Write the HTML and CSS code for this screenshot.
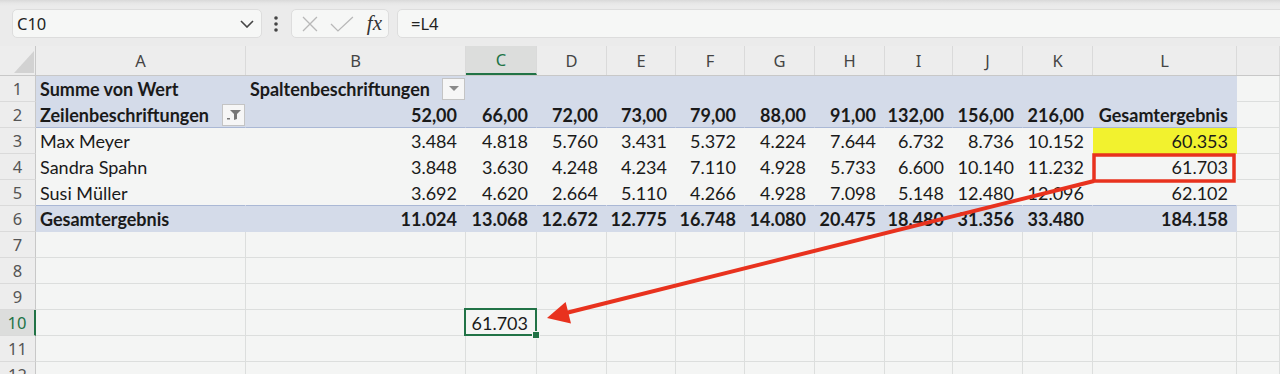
FILE: index.html
```html
<!DOCTYPE html>
<html lang="de">
<head>
<meta charset="UTF-8" />
<meta name="viewport" content="width=device-width, initial-scale=1" />
<title>Pivot – Bezug auf Gesamtergebnis</title>
<link rel="stylesheet" href="styles.css">
</head>
<body>
<div class="app">

<div class="toolbar">
  <div class="namebox">
    <span>C10</span>
    <svg class="chev" width="14" height="8" viewBox="0 0 14 8"><polyline points="1,1 7,7 13,1" fill="none" stroke="#444" stroke-width="1.6"/></svg>
  </div>
  <svg class="kebab" width="6" height="18" viewBox="0 0 6 18"><circle cx="3" cy="3" r="1.8" fill="#444"/><circle cx="3" cy="9" r="1.8" fill="#444"/><circle cx="3" cy="15" r="1.8" fill="#444"/></svg>
  <div class="fxbox">
    <svg width="16" height="16" viewBox="0 0 16 16"><path d="M1 1 L15 15 M15 1 L1 15" stroke="#b8b8b8" stroke-width="1.3" fill="none"/></svg>
    <svg width="24" height="16" viewBox="0 0 24 16"><polyline points="1,8 8,15 23,1" stroke="#b8b8b8" stroke-width="1.3" fill="none"/></svg>
    <span class="fx">fx</span>
  </div>
  <div class="formula">=L4</div>
</div>

<div class="sheet">
  <div class="row colhead">
    <div class="corner"><svg width="20" height="22" viewBox="0 0 20 22"><polygon points="20,0 20,22 0,22" fill="#d2d2d2"/></svg></div>
    <div class="ch">A</div><div class="ch">B</div><div class="ch active">C</div><div class="ch">D</div>
    <div class="ch">E</div><div class="ch">F</div><div class="ch">G</div><div class="ch">H</div>
    <div class="ch">I</div><div class="ch">J</div><div class="ch">K</div><div class="ch">L</div><div class="ch"></div>
  </div>

  <div class="row">
    <div class="rh">1</div>
    <div class="c pv fill b">Summe von Wert</div>
    <div class="c pv fill b">Spaltenbeschriftungen<span class="btn"><svg width="10" height="6" viewBox="0 0 10 6"><polygon points="0,0 10,0 5,5" fill="#8a8a8a"/></svg></span></div>
    <div class="c pv fill"></div><div class="c pv fill"></div><div class="c pv fill"></div><div class="c pv fill"></div>
    <div class="c pv fill"></div><div class="c pv fill"></div><div class="c pv fill"></div><div class="c pv fill"></div>
    <div class="c pv fill"></div><div class="c pv fill"></div><div class="c"></div>
  </div>

  <div class="row">
    <div class="rh">2</div>
    <div class="c pv fill line b">Zeilenbeschriftungen<span class="btn"><svg width="14" height="10" viewBox="0 0 14 10"><rect x="0" y="8" width="3" height="1.5" fill="#777"/><polygon points="3,0 14,0 10,4 10,9 7,10 7,4" fill="#777"/></svg></span></div>
    <div class="c pv fill line b n">52,00</div><div class="c pv fill line b n">66,00</div><div class="c pv fill line b n">72,00</div>
    <div class="c pv fill line b n">73,00</div><div class="c pv fill line b n">79,00</div><div class="c pv fill line b n">88,00</div>
    <div class="c pv fill line b n">91,00</div><div class="c pv fill line b n">132,00</div><div class="c pv fill line b n">156,00</div>
    <div class="c pv fill line b n">216,00</div><div class="c pv fill line b n">Gesamtergebnis</div><div class="c"></div>
  </div>

  <div class="row">
    <div class="rh">3</div>
    <div class="c pv">Max Meyer</div>
    <div class="c pv n">3.484</div><div class="c pv n">4.818</div><div class="c pv n">5.760</div><div class="c pv n">3.431</div>
    <div class="c pv n">5.372</div><div class="c pv n">4.224</div><div class="c pv n">7.644</div><div class="c pv n">6.732</div>
    <div class="c pv n">8.736</div><div class="c pv n">10.152</div><div class="c pv n yellow">60.353</div><div class="c"></div>
  </div>

  <div class="row">
    <div class="rh">4</div>
    <div class="c pv">Sandra Spahn</div>
    <div class="c pv n">3.848</div><div class="c pv n">3.630</div><div class="c pv n">4.248</div><div class="c pv n">4.234</div>
    <div class="c pv n">7.110</div><div class="c pv n">4.928</div><div class="c pv n">5.733</div><div class="c pv n">6.600</div>
    <div class="c pv n">10.140</div><div class="c pv n">11.232</div><div class="c pv n">61.703</div><div class="c"></div>
  </div>

  <div class="row">
    <div class="rh">5</div>
    <div class="c pv line">Susi Müller</div>
    <div class="c pv line n">3.692</div><div class="c pv line n">4.620</div><div class="c pv line n">2.664</div><div class="c pv line n">5.110</div>
    <div class="c pv line n">4.266</div><div class="c pv line n">4.928</div><div class="c pv line n">7.098</div><div class="c pv line n">5.148</div>
    <div class="c pv line n">12.480</div><div class="c pv line n">12.096</div><div class="c pv line n">62.102</div><div class="c"></div>
  </div>

  <div class="row">
    <div class="rh">6</div>
    <div class="c pv fill b">Gesamtergebnis</div>
    <div class="c pv fill b n">11.024</div><div class="c pv fill b n">13.068</div><div class="c pv fill b n">12.672</div><div class="c pv fill b n">12.775</div>
    <div class="c pv fill b n">16.748</div><div class="c pv fill b n">14.080</div><div class="c pv fill b n">20.475</div><div class="c pv fill b n">18.480</div>
    <div class="c pv fill b n">31.356</div><div class="c pv fill b n">33.480</div><div class="c pv fill b n">184.158</div><div class="c"></div>
  </div>

  <div class="row">
    <div class="rh">7</div>
    <div class="c"></div><div class="c"></div><div class="c"></div><div class="c"></div><div class="c"></div><div class="c"></div>
    <div class="c"></div><div class="c"></div><div class="c"></div><div class="c"></div><div class="c"></div><div class="c"></div><div class="c"></div>
  </div>
  <div class="row">
    <div class="rh">8</div>
    <div class="c"></div><div class="c"></div><div class="c"></div><div class="c"></div><div class="c"></div><div class="c"></div>
    <div class="c"></div><div class="c"></div><div class="c"></div><div class="c"></div><div class="c"></div><div class="c"></div><div class="c"></div>
  </div>
  <div class="row">
    <div class="rh">9</div>
    <div class="c"></div><div class="c"></div><div class="c"></div><div class="c"></div><div class="c"></div><div class="c"></div>
    <div class="c"></div><div class="c"></div><div class="c"></div><div class="c"></div><div class="c"></div><div class="c"></div><div class="c"></div>
  </div>
  <div class="row">
    <div class="rh active">10</div>
    <div class="c"></div><div class="c"></div><div class="c n sel">61.703</div><div class="c"></div><div class="c"></div><div class="c"></div>
    <div class="c"></div><div class="c"></div><div class="c"></div><div class="c"></div><div class="c"></div><div class="c"></div><div class="c"></div>
  </div>
  <div class="row">
    <div class="rh">11</div>
    <div class="c"></div><div class="c"></div><div class="c"></div><div class="c"></div><div class="c"></div><div class="c"></div>
    <div class="c"></div><div class="c"></div><div class="c"></div><div class="c"></div><div class="c"></div><div class="c"></div><div class="c"></div>
  </div>
  <div class="row">
    <div class="rh">12</div>
    <div class="c"></div><div class="c"></div><div class="c"></div><div class="c"></div><div class="c"></div><div class="c"></div>
    <div class="c"></div><div class="c"></div><div class="c"></div><div class="c"></div><div class="c"></div><div class="c"></div><div class="c"></div>
  </div>
</div>

<!-- annotation: marked cell and arrow -->
<svg class="marks" width="1280" height="374" viewBox="0 0 1280 374">
  <rect x="1094" y="155" width="140" height="26" fill="none" stroke="#e8321e" stroke-width="3.5"/>
  <line x1="1094" y1="181" x2="566" y2="313" stroke="#e8321e" stroke-width="4"/>
  <polygon points="547,318 565.6,302 571,323.4" fill="#e8321e"/>
</svg>

</div>
</body>
</html>
```

FILE: styles.css
```css
:root {
  --cols: 36px 210px 220px 71px 70px 69px 69px 70px 70px 68px 70px 70px 144px 1fr;
  --grid: #dcdedd;
  --pivot: #d4dbe9;
  --pivot-line: #aab8d5;
  --green: #217346;
}
* {
  box-sizing: border-box;
}
body {
  margin: 0;
  background-color: #f4f5f4;
  color: #1a1a1a;
  overflow: hidden;
}
.app {
  position: relative;
  width: 1280px;
  height: 374px;
  overflow: hidden;
}

/* formula bar */
.toolbar {
  height: 46px;
  display: flex;
  align-items: center;
  padding: 1px 0 0 12px;
  background: linear-gradient(#d9d9d9 0, #e6e6e6 3px, #ebebeb 6px);
  font-family: "Noto Sans", "Open Sans", sans-serif;
  font-size: 16.5px;
  color: #222;
}
.namebox, .fxbox, .formula {
  height: 29px;
  background-color: #f6f7f6;
  border: 1px solid #dddddd;
  border-radius: 5px;
  display: flex;
  align-items: center;
}
.namebox {
  width: 250px;
  padding: 0 7px 0 4px;
  justify-content: space-between;
}
.kebab {
  margin: 0 12px 0 11px;
}
.fxbox {
  width: 98px;
  padding: 0 6px 0 10px;
  gap: 12px;
}
.fx {
  font-family: "Liberation Serif", "DejaVu Serif", serif;
  font-style: italic;
  font-size: 21px;
  color: #333;
  margin-left: 1px;
}
.formula {
  flex: 1;
  margin: 0 -10px 0 8px;
  padding-left: 13px;
}

/* sheet */
.sheet {
  font-family: "Lato", "Liberation Sans", sans-serif;
  font-size: 18px;
}
.row {
  display: grid;
  grid-template-columns: var(--cols);
  height: 26px;
}
.colhead {
  height: 30px;
  background-color: #ededed;
  border-bottom: 1px solid #c8c8c8;
  font-family: "Noto Sans", "Open Sans", sans-serif;
  font-size: 16.5px;
  color: #444;
}
.corner {
  display: flex;
  align-items: flex-end;
  justify-content: flex-end;
  padding: 0 1px 2px 0;
  border-right: 1px solid #c8c8c8;
}
.ch {
  display: flex;
  align-items: center;
  justify-content: center;
  border-right: 1px solid #dadada;
}
.ch.active {
  background-color: #dcdddc;
  color: var(--green);
  border-bottom: 2px solid var(--green);
}
.rh {
  background-color: #ededed;
  border-right: 1px solid #c8c8c8;
  border-bottom: 1px solid #dadada;
  display: flex;
  align-items: center;
  justify-content: center;
  font-family: "Noto Sans", "Open Sans", sans-serif;
  font-size: 16.5px;
  color: #555;
}
.rh.active {
  background-color: #dcdddc;
  color: var(--green);
  border-right: 2px solid var(--green);
}
.c {
  display: flex;
  align-items: center;
  padding: 0 4px;
  white-space: nowrap;
  border-right: 1px solid var(--grid);
  border-bottom: 1px solid var(--grid);
}
.n {
  justify-content: flex-end;
  padding-right: 8px;
}
.b {
  font-weight: bold;
}

/* pivot table */
.pv {
  border-color: transparent;
}
.fill {
  background-color: var(--pivot);
}
.line {
  border-bottom-color: var(--pivot-line);
}
.yellow {
  background-color: #f2f22e;
}
.btn {
  margin-left: auto;
  margin-right: -4px;
  width: 23px;
  height: 22px;
  border: 1px solid #c4c4c4;
  background-color: #f6f6f6;
  display: flex;
  align-items: center;
  justify-content: center;
}

/* selected cell */
.sel {
  position: relative;
}
.sel::after {
  content: "";
  position: absolute;
  inset: -2px -1px -1px -2px;
  border: 2px solid var(--green);
}
.sel::before {
  content: "";
  position: absolute;
  right: -4px;
  bottom: -4px;
  width: 6px;
  height: 6px;
  background-color: var(--green);
  border: 1px solid #f4f5f4;
  z-index: 1;
}

.marks {
  position: absolute;
  left: 0;
  top: 0;
  pointer-events: none;
}
```
